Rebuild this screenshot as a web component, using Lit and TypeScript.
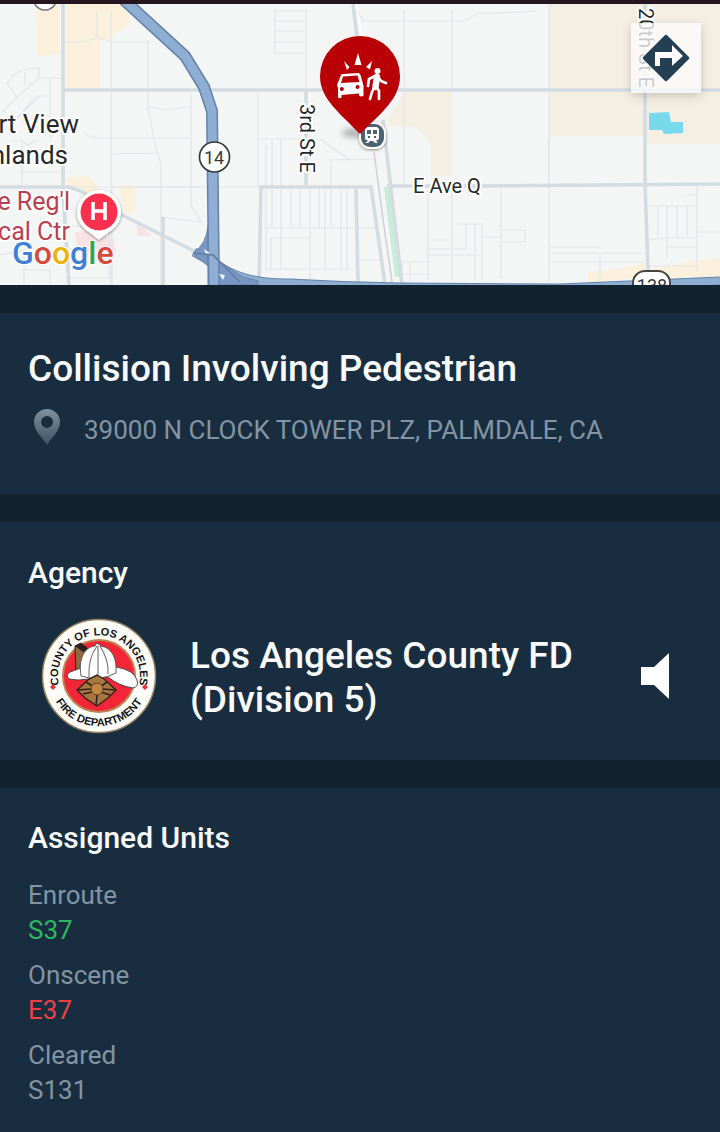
import { LitElement, html, svg, css } from "lit";
import { customElement, property } from "lit/decorators.js";

type UnitGroup = { status: string; units: string[]; tone: string };

const GROUPS: UnitGroup[] = [
  { status: "Enroute", units: ["S37"], tone: "green" },
  { status: "Onscene", units: ["E37"], tone: "red" },
  { status: "Cleared", units: ["S131"], tone: "muted" },
];

@customElement("incident-map")
class IncidentMap extends LitElement {
  static styles = css`
    :host {
      display: block;
      position: relative;
      overflow: hidden;
      background: #f4f5f5;
    }
    .map {
      display: block;
      width: 100%;
      height: auto;
    }
    text {
      font-family: Roboto, "Noto Sans", sans-serif;
    }
    .minor {
      fill: none;
      stroke: #e2e5ea;
      stroke-width: 1.2;
    }
    .street {
      fill: none;
      stroke: #d3dce2;
      stroke-width: 3.6;
    }
    .zone {
      fill: #faf0dc;
    }
    .field {
      fill: #f5efe3;
    }
    .casing {
      fill: none;
      stroke: #6682a8;
      stroke-linejoin: round;
    }
    .highway {
      fill: none;
      stroke: #8eaed3;
      stroke-linejoin: round;
    }
    .label {
      fill: #25282b;
      stroke: #fff;
      stroke-width: 4;
      stroke-linejoin: round;
      paint-order: stroke;
    }
    .place {
      font-size: 26px;
    }
    .road {
      font-size: 20px;
    }
    .hospital {
      font-size: 25px;
      fill: #b9404f;
    }
    .shield {
      font-size: 18px;
      fill: #35383b;
    }
    .google {
      font-size: 32px;
      font-weight: 500;
      stroke: #fff;
      stroke-width: 2;
      paint-order: stroke;
    }
    .directions {
      position: absolute;
      top: 19px;
      right: 19px;
      width: 70px;
      height: 70px;
      padding: 0;
      border: 0;
      display: grid;
      place-items: center;
      background: rgba(250, 250, 250, 0.78);
      box-shadow: 0 3px 10px rgba(0, 0, 0, 0.18);
      cursor: pointer;
    }
    .directions svg {
      width: 48px;
      height: 48px;
    }
  `;

  render() {
    return html`
      <svg class="map" viewBox="0 4 720 281" role="img" aria-label="Map of the incident location">
        <defs>
          <filter id="soft" x="-30%" y="-30%" width="160%" height="160%">
            <feDropShadow dx="0" dy="1" stdDeviation="1.6" flood-opacity="0.45" />
          </filter>
          <filter id="haze" x="-50%" y="-80%" width="200%" height="260%">
            <feGaussianBlur stdDeviation="3" />
          </filter>
        </defs>
        <rect y="4" width="720" height="281" fill="#f4f5f5" />
        ${svg`
        <path class="zone" d="M36 4H60V54L38 56ZM66 4H126L131 24L111 35L109 41L100 40V88H66ZM66 178L88 175L97 185V196L66 188ZM118 185H135V214L124 212ZM588 272L612 270L645 263V277L588 283ZM648 270L664 267L694 261L720 258V276L672 278Z"/>
        <path class="field" d="M549 4H645V136H549ZM645 4H720V144H645ZM406 89H452V176H431V145Q422 126 402 126H388V120ZM656 140H720V144H656Z"/>
        <path d="M75 232L96 230L114 241L116 252H78ZM137 222L152 236H137Z" fill="#f9e2e4"/>
        <path d="M384 187H391L400 277H395Z" fill="#c7ecd8"/>
        <path d="M649 113L669 112L671 122H683V133L664 134L662 130H649Z" fill="#78d9ec"/>
        <path class="minor" d="M66 42H83L97 38L112 42H150M97 12V38M111 12V285M148 40V107L154 140L161 165V285M149 107L167 110L191 107M191 94V205L201 222L162 217M7 83Q16 68 39 68V78L17 97ZM25 72V85M17 97L2 112M39 78H62M50 78V140M50 96H36L16 120M85 134L94 138H191M111 154L155 153M112 187H200M22 172H66M22 140V185M40 96L4 130M112 187V285M66 225L110 230M66 278H109V214M0 255L24 250V283M24 270H50V283M20 140L28 145L36 140"/>
        <path class="minor" d="M275 9V53H304M275 11H305M275 21H305M275 31H305M275 42H305M306 9V89M258 91V187M260 139H302M272 140V187M281 140V187M357 10L363 21H465L478 13H500L536 11M404 10V184M452 10V89M404 145V184M331 161V187M331 160L377 159M266 145V185M320 139L350 160M0 187H258"/>
        <path class="minor" d="M266 187V270M272 187V228M281 187V270M291 187V228M300 187V228M310 187V270M319 187V228M325 187V270M331 187V228M341 187V270M347 187V270M264 228H375M271 238H310V280M271 238V270M264 269H350M359 260H382M402 262H428M402 262V281M410 262V281M428 190V280M452 187V280M428 240H452M428 249H466V224M456 224H482V280M475 224V280M402 274H428M425 255H480"/>
        <path d="M374 152L381 205L392 282" fill="none" stroke="#d5cdd6" stroke-width="1.5"/>
        <path class="minor" d="M501 188V279M480 237H501M501 230H525V242H501M549 140V281M551 247H600M551 253H644M551 262H644M600 253V279M648 206H697M658 206V236M667 206V258M677 206V238M687 206V236M697 184V272M649 240L667 238H697M667 247H697M697 232H720M649 266H697M686 195H697"/>
        <path class="minor" d="M549 4V188"/>
        <path class="street" d="M63 4V190L69 285M64 90H720M306 90V187M259 285L261 187H371L385 284M356 187L358 284M353 4L360 62M383 120L402 285M387 186H480L720 184M645 4V184L648 270M0 187H68C82 190 95 199 118 213L200 254M163 217V285"/>
        <path d="M356 4L362 36" stroke="#fff" stroke-width="1.3" fill="none"/>
        <path class="casing" stroke-width="9" d="M194 252L219 266Q245 284 290 283Q340 286 400 287L560 288L720 281"/>
        <path class="highway" stroke-width="7" d="M194 252L219 266Q245 284 290 283Q340 286 400 287L560 288L720 281"/>
        <path d="M208 233V285H258V281L243 277L218 262V237L208 225Q207 244 193 253L208 266Z" fill="#7898c3" stroke="#6682a8"/>
        <path class="casing" stroke-width="12" d="M124 0L185 56L204 87L212 111L214 287"/>
        <path class="highway" stroke-width="9" d="M124 0L185 56L204 87L212 111L214 287"/>
        <path d="M204 249L210 253L206 255ZM219 274L225 275L223 280Z" fill="#f4f5f5"/>
        <path d="M193 253L213 255L240 282" fill="none" stroke="#6682a8" stroke-width="2"/>
        <ellipse cx="45" cy="0" rx="11" ry="10" fill="#fff" stroke="#77787b" stroke-width="1.5"/>
        <circle cx="214.500" cy="157" r="15" fill="#fff" stroke="#36393c" stroke-width="1.7"/>
        <text class="shield" x="214" y="164" text-anchor="middle">14</text>
        <rect x="633" y="271" width="37" height="30" rx="12" fill="#fff" stroke="#49443f" stroke-width="2"/>
        <text class="shield" x="652" y="292" text-anchor="middle">138</text>
        <text class="label place" x="79" y="133" text-anchor="end">rt View</text>
        <text class="label place" x="68" y="164" text-anchor="end">hlands</text>
        <text class="label hospital" x="70" y="210" text-anchor="end">e Reg'l</text>
        <text class="label hospital" x="70" y="240" text-anchor="end">cal Ctr</text>
        <text class="label road" x="447" y="193" text-anchor="middle">E Ave Q</text>
        <text class="label road" transform="translate(300 104) rotate(90)">3rd St E</text>
        <text class="label road" transform="translate(639 8) rotate(90)">20th St E</text>
        <g filter="url(#soft)">
          <path d="M99 190A22 22 0 0 1 121 212C121 228 107 232 99 240C91 232 77 228 77 212A22 22 0 0 1 99 190Z" fill="#fff"/>
        </g>
        <circle cx="99" cy="212" r="18.500" fill="#fb304c"/>
        <path d="M93 202V220M105 202V220M93 211H105" stroke="#fff" stroke-width="3.600" fill="none"/>
        <text class="google" x="12" y="264"><tspan fill="#3f7fd6">G</tspan><tspan fill="#d5483d">o</tspan><tspan fill="#eab30c">o</tspan><tspan fill="#3f7fd6">g</tspan><tspan fill="#2fa352">l</tspan><tspan fill="#d5483d">e</tspan></text>
        <ellipse cx="354" cy="133" rx="12" ry="4" fill="#333" opacity="0.4" filter="url(#haze)"/>
        <rect x="359" y="122" width="27" height="27" rx="11" fill="#fff" filter="url(#soft)"/>
        <rect x="361" y="124" width="23" height="23" rx="9" fill="#4c6271"/>
        <path fill-rule="evenodd" fill="#fff" d="M367 127H377L379 129V139L376 141L378 143H375L373 141H370L368 143H365L368 141L365 139V129ZM367 130V134H371V130ZM373 130V134H377V130ZM368 136V138H370V136ZM374 136V138H376V136Z"/>
        <path d="M360 36A40 40 0 0 1 400 76C400 99 381 113 360 134C340 113 320 99 320 76A40 40 0 0 1 360 36Z" fill="#b90004"/>
        <g fill="#fff">
          <path d="M358 53L361.500 65H354.500ZM344 61L349.500 67L347 70ZM372 61L370 69.500L366 67Z"/>
          <path fill-rule="evenodd" d="M341 75Q341.500 74 343 74L358 73Q360 73 360.500 75L362.500 82L363.500 86V95.500Q361.500 97.500 359 95.500V93.500L341.500 95V97.500Q339.500 99 338 97.500V88L337 85ZM343 76.500L341 83L359.500 82L357.500 75.500ZM341.800 87A2 2 0 1 0 341.900 87ZM357.500 85A2 2 0 1 0 357.600 85Z"/>
          <circle cx="377.500" cy="71" r="3"/>
        </g>
        <path d="M377 77L375.500 87" stroke="#fff" stroke-width="6.500" stroke-linecap="round"/>
        <path d="M375 76L369 79L368 86M378 77L381 81L386 83M375 86L372 92L370 99M376 86L379 91V99" fill="none" stroke="#fff" stroke-width="2.700" stroke-linecap="round" stroke-linejoin="round"/>
        `}
      </svg>
      <button class="directions" type="button" aria-label="Get directions">
        <svg viewBox="0 0 48 48" aria-hidden="true">
          <path d="M24 2L46 24L24 46L2 24Z" fill="#243e52" stroke="#243e52" stroke-width="2.500" stroke-linejoin="round" />
          <path d="M13 32V18H30V11L41 22L30 32V24H18V32Z" fill="#fafafa" />
        </svg>
      </button>
    `;
  }
}

@customElement("agency-seal")
class AgencySeal extends LitElement {
  static styles = css`
    :host {
      display: block;
      width: 116px;
      height: 116px;
    }
    svg {
      display: block;
      width: 100%;
      height: 100%;
    }
    text {
      font-family: "Liberation Sans", Arial, sans-serif;
      font-weight: 700;
      font-size: 11px;
      fill: #15171c;
    }
  `;

  render() {
    return html`
      <svg viewBox="0 0 116 116" role="img" aria-label="County of Los Angeles Fire Department seal">
        <defs>
          <path id="upper" d="M19.400 72A41 41 0 1 1 96.600 72" />
          <path id="lower" d="M9 68A50 50 0 0 0 107 68" />
        </defs>
        ${svg`
        <circle cx="58" cy="58" r="56.500" fill="#fffdf8" stroke="#988260" stroke-width="1.500"/>
        <circle cx="58" cy="58" r="36" fill="#f32637" stroke="#bc8354" stroke-width="2"/>
        <text text-anchor="middle"><textPath href="#upper" startOffset="50%">COUNTY OF LOS ANGELES</textPath></text>
        <text text-anchor="middle"><textPath href="#lower" startOffset="50%">FIRE DEPARTMENT</textPath></text>
        <path d="M12 66L15 69L12 72L9 69ZM104 66L107 69L104 72L101 69Z" fill="#e03440"/>
        <path d="M34 28L40 25L48 32L42 59L35 58Z" fill="#8d693d" stroke="#272018"/>
        <path d="M34 28L40 25L48 31L42 34Z" fill="#2b2220"/>
        <path d="M40 50L29 54Q24 57 28 61Q36 63 48 61L67 59Q78 68 92 70Q98 69 96 62Q93 52 75 49Z" fill="#fff" stroke="#44383a" stroke-width="0.900"/>
        <path d="M40 58C37 40 44 29 54 28L56 25L60 28C72 30 76 42 75 55Q58 64 40 58Z" fill="#fff" stroke="#55494b" stroke-width="0.900"/>
        <path d="M56 28Q47 40 48 59M57 28V59M59 28Q68 42 67 56" fill="none" stroke="#77706f" stroke-width="1.100"/>
        <path d="M56 57L63 61L75 72L67 80L56 88L44 80L36 72L48 61Z" fill="#a8763f" stroke="#30231c" stroke-width="1.400"/>
        <path d="M36 72L50 71M75 72L61 71M45 64L53 69M66 64L59 69M55 88L56 77M42 76L51 74M69 77L60 74" stroke="#30231c" stroke-width="1.600"/>
        <circle cx="56" cy="71" r="6" fill="#c48741" stroke="#613c20"/>
        `}
      </svg>
    `;
  }
}

@customElement("unit-list")
class UnitList extends LitElement {
  @property({ attribute: false }) groups: UnitGroup[] = [];

  static styles = css`
    :host {
      display: block;
    }
    dl {
      margin: 0;
      display: grid;
      gap: 10px;
      font-size: 26px;
      line-height: 35px;
      color: #8494a3;
    }
    dd {
      margin: 0;
    }
    .green {
      color: #2cb95d;
    }
    .red {
      color: #f04046;
    }
  `;

  render() {
    return html`
      <dl>
        ${this.groups.map(
          (g) => html`
            <div>
              <dt>${g.status}</dt>
              ${g.units.map((u) => html`<dd class=${g.tone}>${u}</dd>`)}
            </div>
          `
        )}
      </dl>
    `;
  }
}

@customElement("app-root")
class AppRoot extends LitElement {
  static styles = css`
    :host {
      display: flex;
      flex-direction: column;
      min-height: 100vh;
      background: #182e40;
      color: #f8fafb;
      font-family: Roboto, "Noto Sans", sans-serif;
    }
    .status {
      height: 4px;
      background: #25151f;
    }
    section {
      border-top: 28px solid #12222e;
      padding: 0 28px;
    }
    h1,
    h2,
    h3,
    p {
      margin: 0;
      font-weight: 500;
    }
    h1 {
      font-size: 37px;
      line-height: 48px;
    }
    h2 {
      font-size: 30px;
      line-height: 40px;
    }
    h3 {
      flex: 1;
      padding-top: 4px;
      font-size: 37px;
      line-height: 44px;
    }
    .incident {
      padding-top: 32px;
      padding-bottom: 46px;
    }
    .address {
      display: flex;
      gap: 20px;
      margin-top: 16px;
      font-size: 26px;
      line-height: 36px;
      color: #8494a3;
    }
    .address p {
      padding-top: 3px;
      font-weight: 400;
    }
    .pin {
      flex: none;
      width: 36px;
      height: 36px;
    }
    .agency {
      padding-top: 31px;
      padding-bottom: 26px;
    }
    .agency-row {
      display: flex;
      align-items: center;
      gap: 33px;
      margin-top: 25px;
      padding-left: 13px;
    }
    .sound {
      display: block;
      flex: none;
      padding: 0;
      border: 0;
      margin-right: 20px;
      background: none;
      cursor: pointer;
    }
    .sound svg {
      display: block;
      width: 32px;
      height: 50px;
    }
    .assigned {
      padding-top: 30px;
      padding-bottom: 24px;
    }
    unit-list {
      margin-top: 20px;
    }
  `;

  render() {
    return html`
      <div class="status"></div>
      <incident-map></incident-map>
      <section class="incident">
        <h1>Collision Involving Pedestrian</h1>
        <div class="address">
          <svg class="pin" viewBox="0 0 36 36" aria-hidden="true">
            <defs>
              <linearGradient id="fade" x1="0" y1="0" x2="0" y2="1">
                <stop offset="0" stop-color="#81909d" />
                <stop offset="1" stop-color="#3c5265" />
              </linearGradient>
            </defs>
            <path fill="url(#fade)" fill-rule="evenodd" d="M19 0A13 13 0 0 1 32 13C32 22 24 28 19 36C14 28 6 22 6 13A13 13 0 0 1 19 0ZM19 7A6 6 0 1 0 19 19A6 6 0 1 0 19 7Z" />
          </svg>
          <p>39000 N CLOCK TOWER PLZ, PALMDALE, CA</p>
        </div>
      </section>
      <section class="agency">
        <h2>Agency</h2>
        <div class="agency-row">
          <agency-seal></agency-seal>
          <h3>Los Angeles County FD (Division 5)</h3>
          <button class="sound" type="button" aria-label="Listen to the radio feed">
            <svg viewBox="0 0 32 50" aria-hidden="true">
              <path d="M1 16H14L29 2V48L14 34H1Z" fill="#fff" />
            </svg>
          </button>
        </div>
      </section>
      <section class="assigned">
        <h2>Assigned Units</h2>
        <unit-list .groups=${GROUPS}></unit-list>
      </section>
    `;
  }
}
